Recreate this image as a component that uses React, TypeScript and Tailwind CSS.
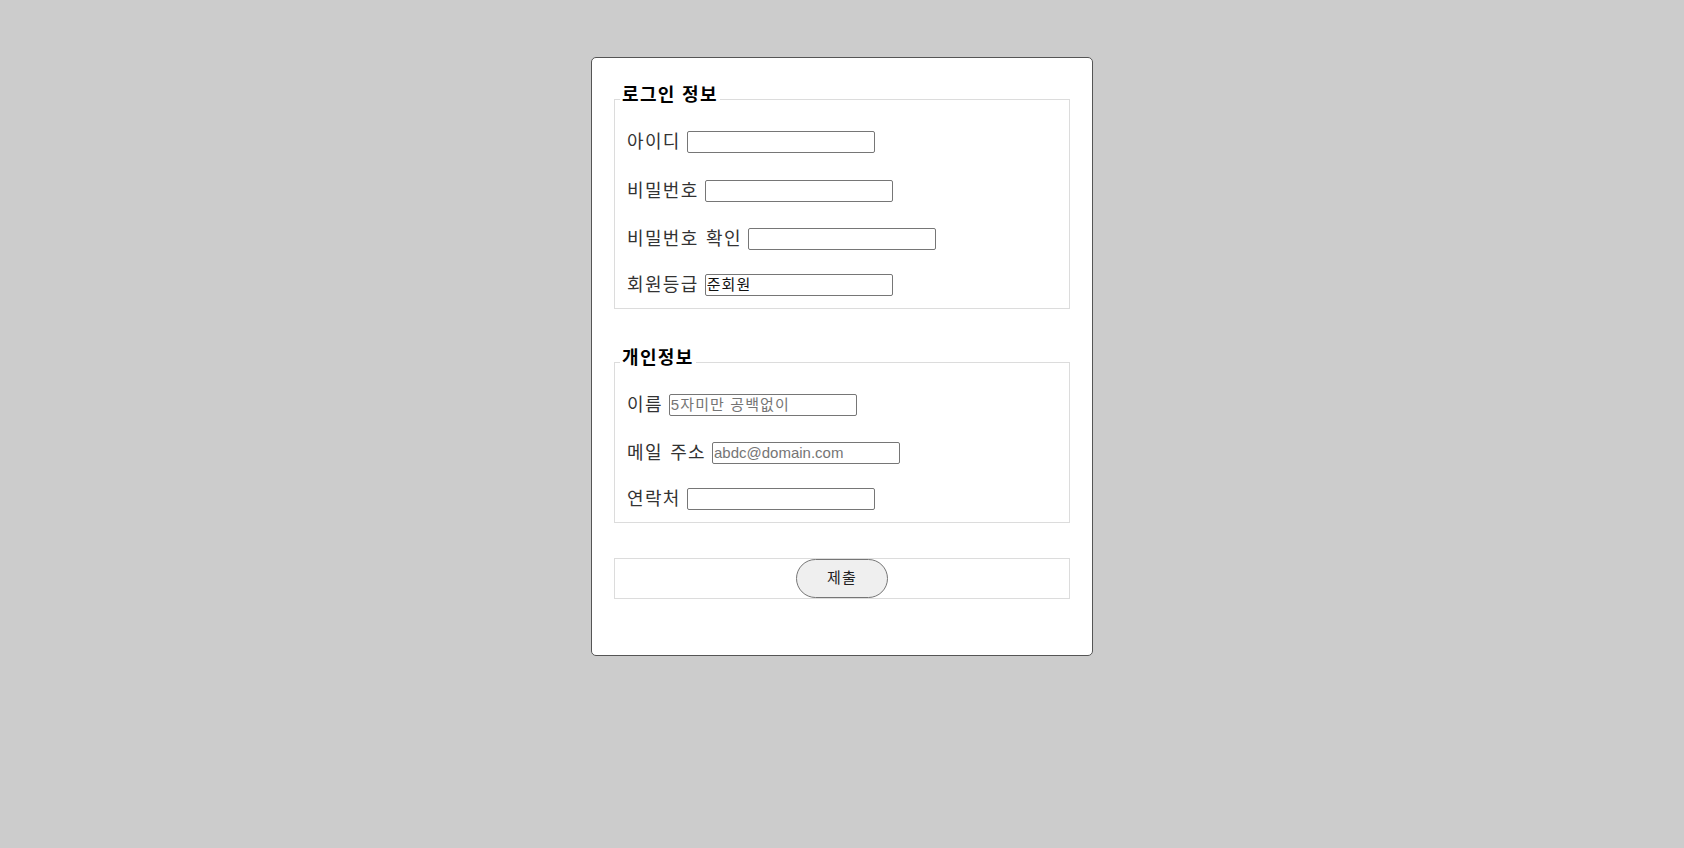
const font = "font-['Liberation_Sans','Noto_Sans_CJK_KR',sans-serif]";

type Field = { label: string; mt: string; value?: string; placeholder?: string; korean?: boolean };

const loginFields: Field[] = [
  { label: "아이디", mt: "mt-[15px]" },
  { label: "비밀번호", mt: "mt-[27px]" },
  { label: "비밀번호 확인", mt: "mt-[26px]" },
  { label: "회원등급", mt: "mt-[24px]", value: "준회원", korean: true },
];

const personalFields: Field[] = [
  { label: "이름", mt: "mt-[15px]", placeholder: "5자미만 공백없이", korean: true },
  { label: "메일 주소", mt: "mt-[26px]", placeholder: "abdc@domain.com" },
  { label: "연락처", mt: "mt-[24px]" },
];

function Row({ field }: { field: Field }) {
  return (
    <div className={`flex items-center gap-[6px] h-[22px] ${field.mt}`}>
      <label className="text-[18px] leading-[22px] text-[#333] tracking-[1.35px] [word-spacing:1px]">
        {field.label}
      </label>
      <input
        type="text"
        defaultValue={field.value}
        placeholder={field.placeholder}
        className={`w-[188px] h-[22px] border border-[#767676] rounded-[2px] bg-white pl-[1px] pr-[2px] text-[15px] text-[#111] placeholder:text-[#757575] outline-none ${
          field.korean ? "tracking-[1.1px]" : ""
        }`}
      />
    </div>
  );
}

function Group({ title, fields, mt }: { title: string; fields: Field[]; mt: string }) {
  return (
    <fieldset className={`border border-[#dcdcdc] mx-[22px] pb-[12px] ${mt}`}>
      <legend className="ml-[5px] px-[2px] pt-[1px] pb-[10px] text-[18px] leading-[22px] font-bold text-black tracking-[1.35px]">
        {title}
      </legend>
      <div className="pl-[12px]">
        {fields.map((f) => (
          <Row key={f.label} field={f} />
        ))}
      </div>
    </fieldset>
  );
}

export default function App() {
  return (
    <div className={`min-h-screen bg-[#cccccc] pt-[57px] ${font}`}>
      <form
        onSubmit={(e) => e.preventDefault()}
        className="mx-auto w-[502px] h-[599px] bg-white border border-[#555] rounded-[5px] pt-[25px]"
      >
        <Group title="로그인 정보" fields={loginFields} mt="mt-0" />
        <Group title="개인정보" fields={personalFields} mt="mt-[37px]" />
        <fieldset className="border border-[#dcdcdc] mx-[22px] mt-[35px] flex justify-center py-0">
          <button
            type="submit"
            className="w-[92px] h-[39px] rounded-full border border-[#767676] bg-[#efefef] text-[15px] text-[#222] tracking-[1.1px] cursor-pointer"
          >
            제출
          </button>
        </fieldset>
      </form>
    </div>
  );
}
